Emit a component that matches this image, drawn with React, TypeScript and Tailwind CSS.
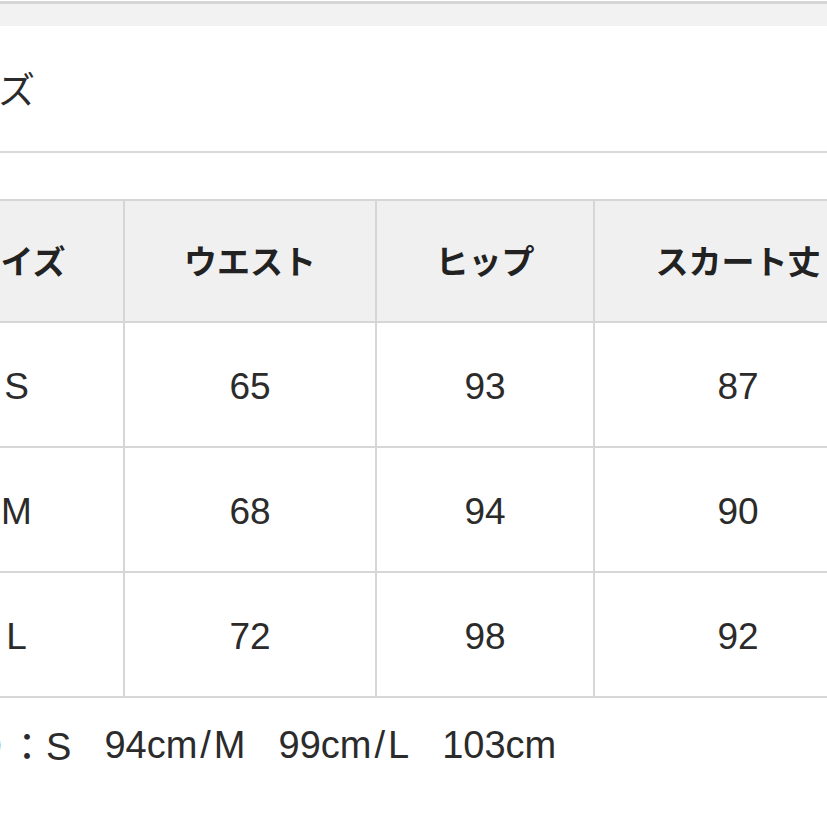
import React from 'react';

const headers = ['サイズ', 'ウエスト', 'ヒップ', 'スカート丈'];
const rows = [
	['S', '65', '93', '87'],
	['M', '68', '94', '90'],
	['L', '72', '98', '92'],
];

const Slash = () => <span className="mx-[3px]">/</span>;

export default function App() {
	return (
		<div className="w-[827px] h-[827px] overflow-hidden bg-white text-[#2b2b2b] font-['Liberation_Sans','Noto_Sans_CJK_JP',sans-serif]">
			{/* top band */}
			<div className="h-[3px] bg-[#d6d6d6] mt-[1px]" />
			<div className="h-[22px] bg-[#f2f2f2]" />

			<div className="ml-[-90px] w-[980px]">
				{/* title */}
				<div className="h-[127px] flex items-center pl-[15px] border-b-2 border-[#dadada]">
					<span className="text-[37px] leading-none font-['Noto_Sans_CJK_JP',sans-serif] pb-[1px]">サイズ</span>
				</div>

				{/* size table */}
				<div className="mt-[46px] bg-[#d6d6d6] py-[2px] grid grid-cols-[213px_250px_216px_286px] gap-[2px]">
					{headers.map((h) => (
						<div
							key={h}
							className="h-[120px] bg-[#f0f0f0] flex items-center justify-center text-[33px] font-bold font-['Noto_Sans_CJK_JP',sans-serif] text-[#222]"
						>
							{h}
						</div>
					))}
					{rows.map((r) =>
						r.map((c, i) => (
							<div
								key={r[0] + i}
								className="h-[123px] bg-white flex items-center justify-center pt-[5px] text-[37px]"
							>
								{c}
							</div>
						))
					)}
				</div>
			</div>

			{/* note */}
			<div className="ml-[-106px] h-[94px] flex items-center text-[38px] gap-[33px] whitespace-nowrap">
				<span>
					<span className="font-['Noto_Sans_CJK_JP',sans-serif]">裾周り：</span>S
				</span>
				<span>
					94cm<Slash />M
				</span>
				<span>
					99cm<Slash />L
				</span>
				<span>103cm</span>
			</div>
		</div>
	);
}
